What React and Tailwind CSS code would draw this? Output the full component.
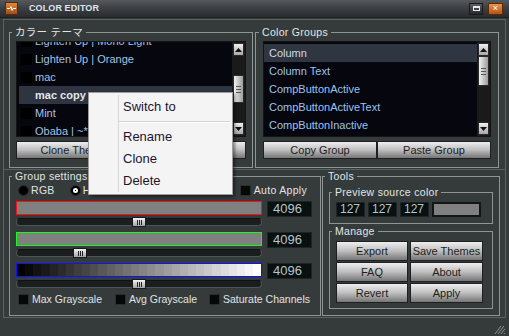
import React from "react";

const themes = [
  "Lighten Up | Mono Light",
  "Lighten Up | Orange",
  "mac",
  "mac copy",
  "Mint",
  "Obaba | ~*9 Dark",
];

const groups = [
  "Column",
  "Column Text",
  "CompButtonActive",
  "CompButtonActiveText",
  "CompButtonInactive",
];

function Btn({ children, className = "" }) {
  return (
    <div
      className={`flex items-center justify-center text-[11px] text-[#1c1c1c] bg-linear-to-b from-[#eeeeee] via-[#bebebe] to-[#767676] border border-[#1c2020] ${className}`}
    >
      {children}
    </div>
  );
}

function Arrow({ down }) {
  return (
    <div className="h-[13px] flex items-center justify-center bg-linear-to-b from-[#f0f0f0] to-[#a8a8a8] border border-[#2a2a2a]">
      <svg width="7" height="4" viewBox="0 0 7 4">
        <path d={down ? "M0 0h7L3.5 4z" : "M0 4h7L3.5 0z"} fill="#111" />
      </svg>
    </div>
  );
}

function Scrollbar({ before, thumb }) {
  return (
    <div className="w-[13px] flex flex-col bg-[#1a1a1a] p-[1px]">
      <Arrow />
      <div style={{ height: before }} />
      <div
        className="flex flex-col items-center justify-center gap-[2px] bg-linear-to-r from-[#f2f2f2] to-[#9c9c9c] border border-[#2a2a2a]"
        style={{ height: thumb }}
      >
        <div className="w-[5px] h-[1px] bg-[#555]" />
        <div className="w-[5px] h-[1px] bg-[#555]" />
        <div className="w-[5px] h-[1px] bg-[#555]" />
      </div>
      <div className="flex-1" />
      <Arrow down />
    </div>
  );
}

function Group({ label, className = "", children }) {
  return (
    <fieldset className={`border border-[#8d9595] m-0 min-w-0 px-[6px] ${className}`}>
      <legend className="-ml-[4px] px-[3px] text-[10.5px] leading-[12px] text-[#e2e6e6] tracking-[0.3px]">
        {label}
      </legend>
      {children}
    </fieldset>
  );
}

function Slider({ color, pos, bar }) {
  return (
    <div className="flex flex-col">
      <div className="flex gap-[5px] items-start">
        <div className={`w-[246px] h-[14px] border ${color} bg-[#808080] flex`}>{bar}</div>
        <div className="w-[45px] h-[16px] bg-[#081010] border border-[#1c2424] text-[13px] leading-[14px] text-[#b6c6cc] pl-[5px]">
          4096
        </div>
      </div>
      <div className="relative w-[246px] h-[8px] mt-[1px] rounded-full bg-[#1a1e1e] border border-[#4c5454] border-t-[#111]">
        <div
          className="absolute top-[-2px] w-[14px] h-[10px] bg-linear-to-b from-[#f4f4f4] to-[#a4a4a4] border border-[#1a1a1a] flex items-center justify-center gap-[1px]"
          style={{ left: pos }}
        >
          <div className="w-[1px] h-[5px] bg-[#222]" />
          <div className="w-[1px] h-[5px] bg-[#222]" />
          <div className="w-[1px] h-[5px] bg-[#222]" />
        </div>
      </div>
    </div>
  );
}

function Check({ label }) {
  return (
    <div className="flex items-center gap-[3px] text-[10.5px] text-[#e0e4e4] whitespace-nowrap">
      <div className="w-[11px] h-[11px] bg-[#060808] border border-[#2a2e2e]" />
      {label}
    </div>
  );
}

export default function App() {
  const steps = Array.from({ length: 30 }, (_, i) => {
    const v = Math.round((i / 29) * 255);
    return `rgb(${v},${v},${v})`;
  });

  return (
    <div className="relative w-[509px] h-[336px] overflow-hidden bg-[#353b3b] font-['Liberation_Sans',Arial,sans-serif] flex flex-col">
      {/* title bar */}
      <div className="h-[18px] flex items-center bg-linear-to-b from-[#55595d] via-[#3b3e42] to-[#2a2c2f] border-b border-[#1c1e20]">
        <div className="ml-[5px] w-[13px] h-[13px] bg-linear-to-b from-[#e08a3c] to-[#a24e12] border border-[#5a2a08] flex items-center justify-center">
          <svg width="9" height="5" viewBox="0 0 9 5">
            <path d="M0 2.5h3l1-2 1 4 1-2h3" stroke="#fff" strokeWidth="1" fill="none" />
          </svg>
        </div>
        <div className="ml-[11px] text-[9px] font-bold text-[#dfe6f2] tracking-[0.1px]">COLOR EDITOR</div>
        <div className="flex-1" />
        <div className="w-[14px] h-[12px] bg-linear-to-b from-[#5c6064] to-[#26282a] border border-[#18191a] flex items-center justify-center">
          <div className="w-[7px] h-[5px] border border-[#e8e8e8] border-t-2" />
        </div>
        <div className="ml-[5px] mr-[6px] w-[15px] h-[12px] bg-linear-to-b from-[#eb9446] to-[#b0561a] border border-[#5a2a08] flex items-center justify-center text-[9px] leading-none text-white">
          ×
        </div>
      </div>

      {/* top pane */}
      <div className="mt-[1px] mx-[3px] h-[151px] border border-[#5a6262] pt-[6px] px-[5px] flex gap-[2px]">
        <Group label="カラー テーマ" className="w-[244px] h-[142px] font-['Liberation_Sans','Noto_Sans_CJK_JP',sans-serif]">
          <div className="mt-[3px] h-[96px] flex bg-[#06060f] border border-[#141414]">
            <div className="flex-1 overflow-hidden pt-[2px]">
              <div className="-mt-[12px]">
                {themes.map((t) => {
                  const sel = t === "mac copy";
                  return (
                    <div
                      key={t}
                      className={`h-[18px] flex items-center ml-[2px] ${sel ? "bg-[#2f3540] font-bold text-[#e2e6ee]" : "text-[#a9c1e2]"}`}
                    >
                      <div className={`w-[11px] h-[11px] ml-[2px] mr-[3px] ${sel ? "" : "bg-[#000]"}`} />
                      <span className="text-[11px] whitespace-nowrap">{t}</span>
                    </div>
                  );
                })}
              </div>
            </div>
            <Scrollbar before={19} thumb={28} />
          </div>
          <div className="mt-[4px] flex">
            <Btn className="w-1/2 h-[18px]">Clone Theme</Btn>
            <Btn className="w-1/2 h-[18px]">New Theme</Btn>
          </div>
        </Group>

        <Group label="Color Groups" className="w-[244px] h-[142px] px-[7px]">
          <div className="mt-[3px] h-[96px] flex bg-[#06060f] border border-[#141414]">
            <div className="flex-1 overflow-hidden pt-[2px]">
              {groups.map((g) => (
                <div
                  key={g}
                  className={`h-[18px] flex items-center pl-[5px] text-[11px] whitespace-nowrap ${g === "Column" ? "bg-[#303641] text-[#cdd9ec]" : "text-[#9cc2ee]"}`}
                >
                  {g}
                </div>
              ))}
            </div>
            <Scrollbar before={0} thumb={30} />
          </div>
          <div className="mt-[4px] flex">
            <Btn className="w-1/2 h-[18px]">Copy Group</Btn>
            <Btn className="w-1/2 h-[18px]">Paste Group</Btn>
          </div>
        </Group>
      </div>

      {/* bottom pane */}
      <div className="mx-[3px] h-[148px] border border-t-0 border-[#5a6262] px-[5px] flex gap-[1px]">
        <Group label="Group settings" className="w-[312px] h-[146px] pr-[8px]">
          <div className="mt-[3px] h-[11px] flex items-center text-[10.5px] text-[#e0e4e4] tracking-[0.3px]">
            <div className="w-[11px] h-[11px] rounded-full bg-[#000] border border-[#2a2a2a] ml-[2px]" />
            <span className="ml-[2px]">RGB</span>
            <div className="ml-[15px] w-[11px] h-[11px] rounded-full bg-[#000] border border-[#2a2a2a] flex items-center justify-center">
              <div className="w-[5px] h-[5px] rounded-full bg-[#fff] flex items-center justify-center">
                <div className="w-[1px] h-[1px] bg-[#000]" />
              </div>
            </div>
            <span className="ml-[2px]">HSV</span>
            <div className="flex-1" />
            <div className="w-[11px] h-[11px] bg-[#060808] border border-[#2a2e2e]" />
            <span className="ml-[3px] mr-[5px]">Auto Apply</span>
          </div>
          <div className="mt-[5px] flex flex-col gap-[6px]">
            <Slider color="border-[#ff1010]" pos={115} />
            <Slider color="border-[#10ff10]" pos={56} />
            <Slider
              color="border-[#1010ff]"
              pos={115}
              bar={steps.map((c, i) => (
                <div key={i} className="flex-1 h-full" style={{ backgroundColor: c }} />
              ))}
            />
          </div>
          <div className="mt-[4px] flex pl-[2px]">
            <div className="w-[97px]"><Check label="Max Grayscale" /></div>
            <div className="w-[94px]"><Check label="Avg Grayscale" /></div>
            <Check label="Saturate Channels" />
          </div>
        </Group>

        <Group label="Tools" className="w-[178px] h-[146px]">
          <Group label="Preview source color" className="mt-[4px] h-[38px] pr-[8px]">
            <div className="mt-[4px] flex gap-[3px]">
              {["127", "127", "127"].map((v, i) => (
                <div key={i} className="w-[29px] h-[15px] bg-[#081010] border border-[#1c2424] text-[12px] leading-[13px] text-[#b6c6cc] pl-[3px]">
                  {v}
                </div>
              ))}
              <div className="w-[49px] h-[15px] bg-[#808080] border-2 border-[#121616]" />
            </div>
          </Group>
          <Group label="Manage" className="mt-[1px] h-[84px] pr-[7px]">
            <div className="mt-[4px] grid grid-cols-[72px_73px] gap-x-[2px] gap-y-[1px]">
              {["Export", "Save Themes", "FAQ", "About", "Revert", "Apply"].map((b) => (
                <Btn key={b} className="h-[20px]">{b}</Btn>
              ))}
            </div>
          </Group>
        </Group>
      </div>

      {/* status / grip */}
      <div className="flex-1 flex justify-end items-end pr-[4px] pb-[2px]">
        <svg width="12" height="10" viewBox="0 0 12 10">
          <path d="M2 10l6-8M5 10l6-8M8 10l4-5.3M11 10l1-1.3" stroke="#8a9292" strokeWidth="1" />
        </svg>
      </div>

      {/* context menu */}
      <div className="absolute left-[88px] top-[92px] w-[145px] bg-[#f4f4f4] border border-[#9c9c9c] shadow-[2px_2px_3px_rgba(0,0,0,0.45)] pt-[3px] pb-[2px] text-[13px] text-[#1b1430]">
        <div className="absolute left-[29px] top-[2px] bottom-[2px] w-[1px] bg-[#d6d6d6]" />
        <div className="h-[22px] leading-[22px] pl-[34px]">Switch to</div>
        <div className="ml-[30px] mr-[2px] my-[3px] h-[2px] border-t border-[#d4d4d4] border-b border-b-[#ffffff]" />
        <div className="h-[22px] leading-[22px] pl-[34px]">Rename</div>
        <div className="h-[22px] leading-[22px] pl-[34px]">Clone</div>
        <div className="h-[22px] leading-[22px] pl-[34px]">Delete</div>
      </div>
    </div>
  );
}
